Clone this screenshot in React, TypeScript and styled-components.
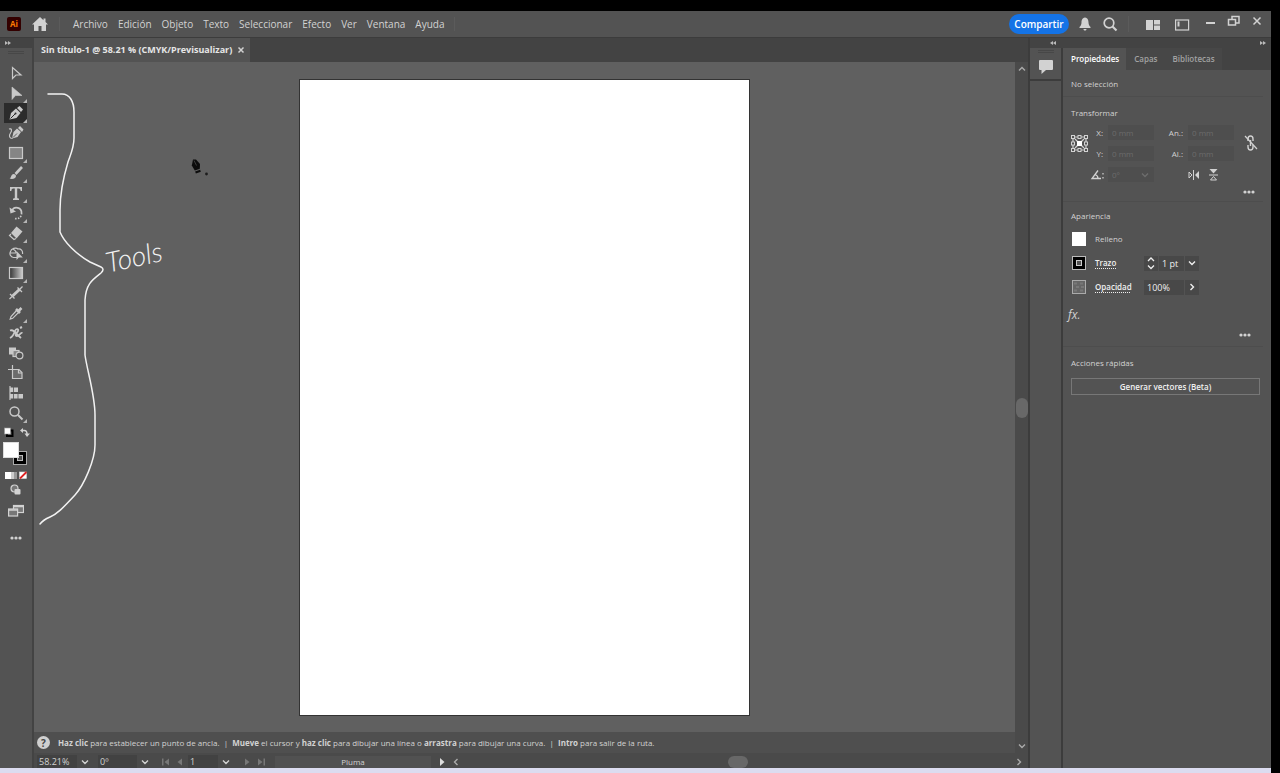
import React from "react";
import styled, { createGlobalStyle, css } from "styled-components";

const color = {
  panel: "#535353",
  rail: "#4a4a4a",
  strip: "#434343",
  line: "#3c3c3c",
  canvas: "#606060",
  field: "#484848",
  text: "#d2d2d2",
  bright: "#f0f0f0",
  dim: "#a2a2a2",
};

const GlobalStyle = createGlobalStyle`
  * { box-sizing: border-box; }
  body { margin: 0; background: #000; }
  button, input, select { font: inherit; color: inherit; }
  svg { display: block; flex: none; }
`;

const Frame = styled.div`
  display: flex;
  flex-direction: column;
  height: 100vh;
  padding: 11px 9px 0 0;
  background: #000;
  color: ${color.text};
  font: 9px/12px "Open Sans", "Noto Sans", sans-serif;
`;

const PlainButton = styled.button`
  display: flex;
  align-items: center;
  justify-content: center;
  padding: 0;
  border: 0;
  background: none;
  color: ${color.text};
`;

/* Header */
const Header = styled.header`
  display: flex;
  align-items: center;
  flex: none;
  height: 27px;
  padding: 0 7px;
  background: ${color.panel};
  border-bottom: 1px solid ${color.line};
`;
const HomeButton = styled(PlainButton)`
  margin-left: 11px;
`;
const Menu = styled.nav`
  display: flex;
  gap: 10px;
  margin-left: 11px;
  padding: 0 9px 0 13px;
  border-left: 1px solid #5b5b5b;
  border-right: 1px solid #5b5b5b;
  font-size: 10px;
  line-height: 14px;
`;
const Spacer = styled.div`
  flex: 1;
`;
const Share = styled(PlainButton)`
  width: 60px;
  height: 20px;
  margin-right: 9px;
  border-radius: 10px;
  background: #1473e6;
  color: #fff;
  font-size: 10px;
  font-weight: 600;
`;
const HeaderTools = styled.div`
  display: flex;
  gap: 10px;
  padding-right: 10px;
  border-right: 1px solid #5b5b5b;
`;
const ViewTools = styled.div`
  display: flex;
  gap: 13px;
  margin: 0 14px 0 16px;
`;
const WindowTools = styled.div`
  display: flex;
  gap: 9px;
  padding-bottom: 6px;
`;

/* Workspace */
const Workspace = styled.div`
  display: flex;
  flex: 1;
  min-height: 0;
`;
const ToolRail = styled.aside`
  display: flex;
  flex-direction: column;
  flex: none;
  width: 34px;
  background: ${color.panel};
  border-right: 2px solid #434343;
`;
const Strip = styled.div<{ $split?: boolean }>`
  display: flex;
  align-items: center;
  justify-content: space-between;
  flex: none;
  height: 10px;
  padding: 0 5px;
  background: ${color.strip};
  ${(p) => p.$split && css`padding: 0 5px 0 20px;`}
`;
const Grip = styled.div`
  width: 16px;
  height: 3px;
  margin: 3px auto 9px;
  border-top: 1px solid #474747;
  border-bottom: 1px solid #474747;
`;
const Tool = styled(PlainButton)<{ $active?: boolean }>`
  position: relative;
  flex: none;
  width: 23px;
  height: 20px;
  margin-left: 4px;
  background: ${(p) => (p.$active ? "#2b2b2b" : "none")};
  color: #c9c9c9;
`;
const Corner = styled.i`
  position: absolute;
  right: 0;
  bottom: 0;
  border: 2px solid;
  border-color: transparent #b5b5b5 #b5b5b5 transparent;
`;
const Swatches = styled.div`
  display: flex;
  flex-direction: column;
  gap: 5px;
  padding: 4px 3px 0;
`;
const RailButton = styled(PlainButton)<{ $h: number }>`
  height: ${(p) => p.$h}px;
  width: 31px;
`;

/* Document */
const Document = styled.main`
  display: flex;
  flex-direction: column;
  flex: 1;
  min-width: 0;
`;
const DocTabs = styled.div`
  flex: none;
  height: 24px;
  background: ${color.strip};
`;
const DocTab = styled.div`
  display: flex;
  align-items: center;
  gap: 5px;
  width: max-content;
  height: 24px;
  padding: 0 5px 0 7px;
  background: ${color.panel};
  color: #e6e6e6;
  font-weight: 700;
`;
const DocBody = styled.div`
  display: flex;
  flex: 1;
  min-height: 0;
`;
const Stage = styled.div`
  display: flex;
  flex-direction: column;
  flex: 1;
  min-width: 0;
`;
const Canvas = styled.div`
  position: relative;
  display: flex;
  align-items: center;
  justify-content: center;
  flex: 1;
  min-height: 0;
  background: ${color.canvas};
`;
const Artboard = styled.div`
  height: calc(100% - 33px);
  aspect-ratio: 451 / 637;
  background: #fff;
  border: 1px solid #333;
`;
const Ink = styled.svg`
  position: absolute;
  left: 0;
  top: 0;
`;
const HandNote = styled.span`
  position: absolute;
  left: 71px;
  top: 178px;
  color: #f2f2f2;
  font: italic 300 28px/32px Lato, sans-serif;
  transform: rotate(-12deg);
`;
const Hint = styled.p`
  display: flex;
  align-items: center;
  flex: none;
  height: 21px;
  margin: 0;
  padding-left: 3px;
  gap: 8px;
  background: #4f4f4f;
  white-space: nowrap;
  font-size: 8px;
`;
const HelpDot = styled.span`
  display: grid;
  place-items: center;
  width: 13px;
  height: 13px;
  border-radius: 50%;
  background: #cfcfcf;
  color: #444;
  font-size: 10px;
  font-weight: 700;
`;
const VScroll = styled.div`
  display: flex;
  flex-direction: column;
  align-items: center;
  flex: none;
  width: 13px;
  padding: 2px 0;
  background: ${color.rail};
  color: #aaa;
`;
const Thumb = styled.div<{ $w: number; $h: number }>`
  flex: none;
  width: ${(p) => p.$w}px;
  height: ${(p) => p.$h}px;
  border-radius: 6px;
  background: #686868;
`;
const Status = styled.footer`
  display: flex;
  align-items: center;
  flex: none;
  height: 15px;
  overflow: hidden;
  padding: 2px 4px 0 3px;
  background: ${color.rail};
`;
const Pick = styled.label<{ $w: number }>`
  display: flex;
  align-items: center;
  flex: none;
  width: ${(p) => p.$w}px;
  margin-right: 5px;
  select {
    appearance: none;
    flex: 1;
    min-width: 0;
    height: 14px;
    padding: 0 2px;
    border: 0;
    border-radius: 0;
    background: #424242;
  }
  svg { width: 16px; }
`;
const PageNav = styled.div`
  display: flex;
  gap: 4px;
  margin: 0 3px;
  color: #777;
`;
const ToolName = styled.div`
  flex: none;
  width: 156px;
  margin-left: 6px;
  text-align: center;
  background: #515151;
  font-size: 8px;
`;
const HScroll = styled.div`
  display: flex;
  align-items: center;
  flex: 1;
  gap: 4px;
  padding-left: 6px;
  color: #aaa;
`;

/* Dock */
const Dock = styled.aside`
  display: flex;
  flex-direction: column;
  flex: none;
  width: 243px;
  border-left: 2px solid ${color.line};
`;
const DockBody = styled.div`
  display: flex;
  flex: 1;
  min-height: 0;
`;
const IconRail = styled.div`
  flex: none;
  width: 33px;
  background: ${color.panel};
  border-right: 2px solid ${color.line};
`;
const IconSlot = styled.div`
  display: flex;
  flex-direction: column;
  align-items: center;
  height: 33px;
  border-bottom: 2px solid ${color.line};
`;
const ShortGrip = styled(Grip)`
  margin: 2px auto 4px;
`;
const Panel = styled.section`
  flex: 1;
  min-width: 0;
  background: ${color.panel};
`;
const PanelTabs = styled.div`
  display: flex;
  height: 22px;
  background: ${color.strip};
  font-size: 8px;
`;
const PanelTab = styled(PlainButton)<{ $on?: boolean }>`
  padding: 0 7px 0 8px;
  background: ${(p) => (p.$on ? color.panel : "#474747")};
  color: ${(p) => (p.$on ? "#fff" : color.dim)};
  font-weight: 600;
`;
const Section = styled.section<{ $h: number; $pad: number }>`
  display: flex;
  flex-direction: column;
  min-height: ${(p) => p.$h}px;
  margin-right: 8px;
  padding: ${(p) => p.$pad}px 3px 0 8px;
  font-size: 8px;
  & + & {
    border-top: 1px solid #4d4d4d;
  }
`;
const Heading = styled.h2`
  margin: 0;
  font-size: 8px;
  line-height: 12px;
  font-weight: 400;
`;
const TransformGrid = styled.div`
  display: grid;
  grid-template-columns: 17px 20px 46px 34px 46px 1fr;
  grid-template-rows: repeat(3, 21px);
  align-items: center;
  margin-top: 3px;
`;
const FieldLabel = styled.label`
  padding-right: 5px;
  text-align: right;
`;
const Field = styled.input`
  width: 100%;
  height: 15px;
  padding: 0 4px;
  border: 0;
  background: #4e4e4e;
  color: #6c6c6c;
`;
const Span = styled.div<{ $col: string; $row: string }>`
  grid-column: ${(p) => p.$col};
  grid-row: ${(p) => p.$row};
  display: flex;
  align-items: center;
  gap: 9px;
`;
const AngleBox = styled.div`
  grid-column: 3;
  grid-row: 3;
  display: flex;
  align-items: center;
  padding-right: 4px;
  background: #4e4e4e;
  color: #6c6c6c;
`;
const More = styled(PlainButton)<{ $inset: number }>`
  align-self: flex-end;
  height: 10px;
  margin-top: 2px;
  margin-right: ${(p) => p.$inset}px;
`;
const LookList = styled.div`
  margin-top: 5px;
`;
const LookRow = styled.div`
  display: flex;
  align-items: center;
  height: 24px;
`;
const LookName = styled.label<{ $link?: boolean }>`
  width: 49px;
  margin-left: 8px;
  ${(p) =>
    p.$link &&
    css`
      color: ${color.bright};
      font-weight: 600;
      text-decoration: underline dotted;
      text-underline-offset: 2px;
    `}
`;
const Combo = styled.div`
  display: flex;
  align-items: center;
  height: 15px;
  gap: 1px;
  font-size: 9px;
`;
const ComboInput = styled.input<{ $w: number }>`
  width: ${(p) => p.$w}px;
  height: 15px;
  padding: 0 3px;
  border: 0;
  background: ${color.field};
  color: ${color.bright};
`;
const ComboButton = styled(PlainButton)`
  width: 14px;
  height: 15px;
  background: ${color.field};
  color: #eee;
`;
const Fx = styled(PlainButton)`
  align-self: flex-start;
  margin: 8px 0 5px -3px;
  font: italic 12px/16px "Open Sans", sans-serif;
`;
const Action = styled(PlainButton)`
  width: 100%;
  height: 17px;
  margin-top: 9px;
  border: 1px solid #777;
  color: ${color.bright};
  font-size: 8px;
  font-weight: 600;
`;
const Taskbar = styled.div`
  flex: none;
  height: 5px;
  background: #dcdcf0;
`;

type GlyphProps = { w?: number; h?: number; children: React.ReactNode };
const Glyph = ({ w = 16, h = 16, children }: GlyphProps) => (
  <svg width={w} height={h} viewBox={`0 0 ${w} ${h}`} fill="none" stroke="currentColor" strokeWidth="1.2" aria-hidden="true">
    {children}
  </svg>
);

const Chevron = ({ dir = "down" }: { dir?: "down" | "up" | "left" | "right" }) => {
  const d = {
    down: "M2 3.5 5 6.5 8 3.5",
    up: "M2 6.5 5 3.5 8 6.5",
    left: "M6.5 2 3.5 5 6.5 8",
    right: "M3.5 2 6.5 5 3.5 8",
  }[dir];
  return (
    <Glyph w={10} h={10}>
      <path d={d} strokeWidth="1.4" />
    </Glyph>
  );
};

const Dots = () => (
  <Glyph w={14} h={6}>
    <g fill="currentColor" stroke="none">
      <circle cx="3" cy="3" r="1.6" />
      <circle cx="7" cy="3" r="1.6" />
      <circle cx="11" cy="3" r="1.6" />
    </g>
  </Glyph>
);

const DoubleArrow = ({ left }: { left?: boolean }) => (
  <Glyph w={6} h={5}>
    <path fill="#bbb" stroke="none" d={left ? "M3 0v4L0 2zM6 0v4L3 2z" : "M0 0v4l3-2zM3 0v4l3-2z"} />
  </Glyph>
);

const tools: { name: string; corner?: boolean; active?: boolean; art: React.ReactNode }[] = [
  { name: "Selección", art: <path d="M4.5 2.5v11l3.500-3.500h5z" /> },
  { name: "Selección directa", corner: true, art: <path fill="currentColor" d="M4 2v12.500l3.500-4h6.500z" strokeWidth="0.6" /> },
  {
    name: "Pluma",
    corner: true,
    active: true,
    art: (
      <>
        <path fill="currentColor" stroke="none" d="M1.500 14.500 3 8l5-4.500 4.500 4.500-4 5z" />
        <path fill="currentColor" stroke="none" d="m9 3 2.500-2 3.500 3.500-2 2.500z" />
        <path d="m2.500 13.500 4.500-4.500" stroke="#2b2b2b" strokeWidth="1" />
        <circle cx="7.500" cy="8.500" r="1" fill="#2b2b2b" stroke="none" />
      </>
    ),
  },
  {
    name: "Curvatura",
    art: (
      <>
        <path fill="currentColor" stroke="none" d="m4 13.500 1.500-6.500L9 3.500 13 7l-3.500 5zM10 3l2-2 3.500 3.500L14 7z" />
        <path d="m5 12.500 4-4" stroke="#535353" strokeWidth="0.900" />
        <path d="M1 4c3-1 3 2 1.500 4-2 3-1 5.500 2 5.500" />
      </>
    ),
  },
  { name: "Rectángulo", corner: true, art: <rect x="1.5" y="2.5" width="13" height="11" fill="#858585" /> },
  {
    name: "Pincel",
    corner: true,
    art: (
      <>
        <path d="m14 2-6.500 7" strokeWidth="2.600" />
        <path fill="currentColor" stroke="none" d="M1.500 13.500c2-.5 1.500-4.500 4-4.500 3 0 3 3 1.500 4s-3.500 1.300-5.500.5z" />
      </>
    ),
  },
  {
    name: "Texto",
    corner: true,
    art: (
      <path
        fill="currentColor"
        stroke="none"
        d="M2 2h12v4h-1.300c-.3-1.600-.8-2.400-2-2.400H9.200v9c0 .7.600.9 1.800 1V15H5v-1.400c1.200-.1 1.800-.3 1.800-1v-9H5.300c-1.200 0-1.700.8-2 2.400H2z"
      />
    ),
  },
  {
    name: "Rotar",
    corner: true,
    art: (
      <>
        <path d="M4 5.500A5 5 0 0 1 13.500 8" strokeWidth="1.700" />
        <path d="M13.500 8A5 5 0 0 1 6 13" strokeDasharray="1.500 1.300" strokeWidth="1.700" />
        <path fill="currentColor" stroke="none" d="M1.500 2.500 2.500 8.500l5.500-2z" />
      </>
    ),
  },
  {
    name: "Borrador",
    corner: true,
    art: (
      <>
        <path fill="currentColor" stroke="none" d="m8.500 1.500 6 5-6 7L3 8z" />
        <path d="m3 9-1.500 1.500 4.500 4L8 13.500" />
      </>
    ),
  },
  {
    name: "Creador de formas",
    corner: true,
    art: (
      <>
        <path d="M9 12.500H5.500a4 4 0 0 1-3-6C3 3.500 8 2 10 4c3-.5 5 2 4.500 5M5 4c2 1 3 2.500 3.500 4M2.500 8H8" />
        <path fill="currentColor" stroke="none" d="M8.500 6v9l2.300-2.500h4z" />
      </>
    ),
  },
  {
    name: "Degradado",
    corner: true,
    art: (
      <>
        <defs>
          <linearGradient id="fade">
            <stop stopColor="#333" />
            <stop offset="1" stopColor="#ccc" />
          </linearGradient>
        </defs>
        <rect x="1.5" y="2.500" width="13" height="11" fill="url(#fade)" />
      </>
    ),
  },
  {
    name: "Cota",
    art: (
      <>
        <path d="m4.500 11 7-6.500" strokeWidth="3" />
        <path d="m2 9 4.500 4.500M9.500 2.500 14 7M1.500 14l2.500-2.500M12 4l2.500-2.500" strokeWidth="1.300" />
      </>
    ),
  },
  {
    name: "Cuentagotas",
    corner: true,
    art: (
      <>
        <path d="m9 5-6 6.500-.8 2.500 2.500-.7L11 7" />
        <path d="m8 4 4 4M11 5.500 13.500 3" strokeWidth="2.600" />
      </>
    ),
  },
  {
    name: "Posición libre",
    art: (
      <>
        <path d="M2 13c2-1 4-4 5-7s4-2 3 0-4 5-1 5 3-4 5.500-3" strokeWidth="1.800" />
        <path d="M2 5.500c3-1 5 1 7 4l4 3.500" strokeWidth="1.800" />
        <path d="m12 3 2-1" strokeWidth="2" />
      </>
    ),
  },
  {
    name: "Fusión",
    art: (
      <>
        <rect x="1" y="2.500" width="7" height="7" fill="currentColor" stroke="none" />
        <rect x="5" y="5.500" width="6" height="6" fill="#868686" />
        <circle cx="11.500" cy="10.500" r="3.400" fill="#535353" />
      </>
    ),
  },
  {
    name: "Mesa de trabajo",
    art: (
      <>
        <path d="M4.500 0v5M0 4.500h4" />
        <path d="M4.500 4.500h6.500l3 3v6H4.500z" fill="#6c6c6c" />
        <path d="M10.500 4.500v3.500H14" />
      </>
    ),
  },
  {
    name: "Gráfica",
    art: (
      <>
        <path d="M2 1v14" />
        <rect x="2" y="2.500" width="8" height="4.500" fill="currentColor" stroke="none" />
        <rect x="2" y="9" width="13" height="4.500" fill="currentColor" stroke="none" />
        <path d="M5.500 9v5M10 9v5M5.500 2v5" stroke="#535353" strokeWidth="0.800" />
      </>
    ),
  },
  {
    name: "Zoom",
    corner: true,
    art: (
      <>
        <circle cx="6.500" cy="6.500" r="4.500" strokeWidth="1.500" />
        <path d="m10 10 4.500 4.500" strokeWidth="2" />
      </>
    ),
  },
];

const menus = ["Archivo", "Edición", "Objeto", "Texto", "Seleccionar", "Efecto", "Ver", "Ventana", "Ayuda"];

const SwatchArt = () => (
  <>
    <Glyph w={28} h={10}>
      <rect x="4" y="3.500" width="5.500" height="5.500" stroke="#000" strokeWidth="2" />
      <rect x="1.500" y="1" width="6" height="6" fill="#fff" stroke="#999" strokeWidth="0.600" />
      <path d="M19 3.500h2.500c2 0 2.500 1 2.500 4" strokeWidth="1.500" />
      <path fill="currentColor" stroke="none" d="M17 3.500 20 1v5zM21.500 6.500H27L24 10z" />
    </Glyph>
    <Glyph w={28} h={24}>
      <rect x="10.500" y="9.500" width="13" height="13" fill="#000" stroke="#aaa" strokeWidth="1" />
      <rect x="14.500" y="13.500" width="5" height="5" fill="#535353" stroke="#bbb" strokeWidth="1" />
      <rect x="0.500" y="0.500" width="15" height="15" fill="#fff" stroke="#ddd" strokeWidth="1" />
    </Glyph>
    <Glyph w={28} h={8}>
      <rect x="2" y="1" width="6" height="7" fill="#fff" stroke="none" />
      <rect x="8" y="1" width="6" height="7" fill="#999" stroke="none" />
      <rect x="8" y="1" width="3" height="7" fill="#ccc" stroke="none" />
      <rect x="16.500" y="1" width="7" height="6.500" fill="#fff" stroke="#ddd" strokeWidth="0.600" />
      <path d="m17 7.500 6.500-6.500" stroke="#d22" strokeWidth="1.800" />
    </Glyph>
  </>
);

const ReferenceGrid = () => (
  <Glyph w={17} h={17}>
    {[2, 8.5, 15].map((y) =>
      [2, 8.5, 15].map((x) => (
        <rect key={`${x}-${y}`} x={x - 1.5} y={y - 1.5} width="3" height="3" strokeWidth="1" />
      ))
    )}
    <path d="M4 2h3M10 2h3M4 15h3M10 15h3M2 4v3M2 10v3M15 4v3M15 10v3M4 4l3 3M13 4l-3 3M4 13l3-3M13 13l-3-3" />
    <rect x="6.500" y="6.500" width="4" height="4" fill="#fff" stroke="#fff" strokeWidth="1" />
  </Glyph>
);

export default function App() {
  return (
    <Frame>
      <GlobalStyle />
      <Header>
        <svg width="14" height="14" viewBox="0 0 14 14" role="img" aria-label="Illustrator">
          <rect width="14" height="14" rx="2" fill="#330000" />
          <text x="7" y="10" textAnchor="middle" fill="#ff7c00" fontSize="8" fontWeight="700" fontFamily="Open Sans">Ai</text>
        </svg>
        <HomeButton aria-label="Inicio">
          <Glyph>
            <path fill="currentColor" stroke="none" d="M8 1 0 8.500h2V15h4.500v-5h3v5H14V8.500h2l-2.500-2.400V2.500h-2v1.700z" />
          </Glyph>
        </HomeButton>
        <Menu>
          {menus.map((m) => (
            <PlainButton key={m}>{m}</PlainButton>
          ))}
        </Menu>
        <Spacer />
        <Share>Compartir</Share>
        <HeaderTools>
          <PlainButton aria-label="Notificaciones">
            <Glyph w={14}>
              <path fill="currentColor" stroke="none" d="M7 1.500c-3 .5-3.500 3-3.500 5S2.500 10 1.500 11v1h11v-1c-1-1-2-2.500-2-4.500s-.5-4.500-3.500-5zM5.500 13h3c0 2-3 2-3 0z" />
            </Glyph>
          </PlainButton>
          <PlainButton aria-label="Buscar">
            <Glyph>
              <circle cx="7" cy="7" r="4.800" strokeWidth="1.700" />
              <path d="m10.500 10.500 4 4" strokeWidth="2.200" />
            </Glyph>
          </PlainButton>
        </HeaderTools>
        <ViewTools>
          <PlainButton aria-label="Organizar documentos">
            <Glyph>
              <path fill="currentColor" stroke="none" d="M1 4h7v10H1zM9 4h6v4.500H9zM9 9.500h6V14H9z" />
            </Glyph>
          </PlainButton>
          <PlainButton aria-label="Espacio de trabajo">
            <Glyph>
              <rect x="1.600" y="4" width="13" height="10" />
              <path d="M4.500 5.500v5" strokeWidth="2" />
            </Glyph>
          </PlainButton>
        </ViewTools>
        <WindowTools>
          <PlainButton aria-label="Minimizar">
            <Glyph w={14} h={14}>
              <path d="M2 9h9" strokeWidth="2" />
            </Glyph>
          </PlainButton>
          <PlainButton aria-label="Restaurar">
            <Glyph w={14} h={14}>
              <rect x="1.500" y="5.500" width="7" height="5.500" strokeWidth="1.500" />
              <path d="M5 5V2.500h7V9H9" strokeWidth="1.500" />
            </Glyph>
          </PlainButton>
          <PlainButton aria-label="Cerrar">
            <Glyph w={14} h={14}>
              <path d="m3.500 3.500 7 7m0-7-7 7" strokeWidth="1.500" />
            </Glyph>
          </PlainButton>
        </WindowTools>
      </Header>

      <Workspace>
        <ToolRail>
          <Strip><DoubleArrow /></Strip>
          <Grip />
          {tools.map((t) => (
            <Tool key={t.name} aria-label={t.name} $active={t.active}>
              <Glyph>{t.art}</Glyph>
              {t.corner && <Corner />}
            </Tool>
          ))}
          <Swatches><SwatchArt /></Swatches>
          <RailButton $h={22} aria-label="Modo de dibujo">
            <Glyph w={12} h={12}>
              <circle cx="4.500" cy="4.500" r="3.500" fill="#777" />
              <rect x="4.500" y="5" width="6" height="5.500" rx="1" fill="currentColor" stroke="none" />
            </Glyph>
          </RailButton>
          <RailButton $h={20} aria-label="Modo de pantalla">
            <Glyph w={16} h={14}>
              <rect x="5.500" y="1.500" width="10" height="7" fill="#777" />
              <rect x="0.600" y="5" width="9" height="7" fill="#777" />
              <path d="M5.500 2.500h10M1 6h9" strokeWidth="1.500" />
            </Glyph>
          </RailButton>
          <RailButton $h={34} aria-label="Editar barra de herramientas"><Dots /></RailButton>
        </ToolRail>

        <Document>
          <DocTabs>
            <DocTab>
              Sin título-1 @ 58.21 % (CMYK/Previsualizar)
              <PlainButton aria-label="Cerrar documento">
                <Glyph w={8} h={8}>
                  <path d="m1.500 1.500 5 5m0-5-5 5" strokeWidth="1.500" />
                </Glyph>
              </PlainButton>
            </DocTab>
          </DocTabs>
          <DocBody>
            <Stage>
              <Canvas>
                <Artboard />
                <Ink width="180" height="480" viewBox="34 62 180 480" fill="none" aria-hidden="true">
                  <path
                    d="M48 94H62C70 94 74 102 74 112V138C74 148 70 156 68 162C62 182 60 195 60 210V232C64 242 76 254 90 262L101 267Q105 269 101 273C92 280 86 284 85 300V355C87 370 95 395 95 415V445C95 460 84 485 75 495C62 509 57 514 50 517Q43 520 40 524"
                    stroke="#f2f2f2"
                    strokeWidth="1.500"
                    strokeLinecap="round"
                  />
                  <path d="M193 159.500 191.800 165.500l3 5 5-1.800.2-4.700-4-4.500z" fill="#0c0c0c" />
                  <path d="m194 160.500 2.500 5" stroke="#505050" strokeWidth="0.700" />
                  <path d="m195.500 172.500 5-1.800" stroke="#0c0c0c" strokeWidth="2.200" />
                  <circle cx="206.500" cy="174" r="1.400" fill="#1c1c1c" />
                </Ink>
                <HandNote>Tools</HandNote>
              </Canvas>
              <Hint>
                <HelpDot>?</HelpDot>
                <span>
                  <b>Haz clic</b> para establecer un punto de ancla. &nbsp;|&nbsp; <b>Mueve</b> el cursor y <b>haz clic</b> para dibujar una línea o <b>arrastra</b> para dibujar una curva. &nbsp;|&nbsp; <b>Intro</b> para salir de la ruta.
                </span>
              </Hint>
            </Stage>
            <VScroll>
              <Chevron dir="up" />
              <Spacer />
              <Thumb $w={12} $h={20} />
              <Spacer />
              <Chevron />
            </VScroll>
          </DocBody>
          <Status>
            <Pick $w={56}>
              <select aria-label="Nivel de zoom"><option>58.21%</option></select>
              <Chevron />
            </Pick>
            <Pick $w={55}>
              <select aria-label="Rotación"><option>0º</option></select>
              <Chevron />
            </Pick>
            <PageNav>
              <Glyph w={10} h={10}><path fill="currentColor" stroke="none" d="M1 1.500h1.500v7H1zM8 1.500v7L3.500 5z" /></Glyph>
              <Glyph w={10} h={10}><path fill="currentColor" stroke="none" d="M7 1.500v7L2.500 5z" /></Glyph>
            </PageNav>
            <Pick $w={46}>
              <select aria-label="Mesa de trabajo"><option>1</option></select>
              <Chevron />
            </Pick>
            <PageNav>
              <Glyph w={10} h={10}><path fill="currentColor" stroke="none" d="M3 1.500v7L7.500 5z" /></Glyph>
              <Glyph w={10} h={10}><path fill="currentColor" stroke="none" d="M2 1.500v7L6.500 5zM7.500 1.500H9v7H7.500z" /></Glyph>
            </PageNav>
            <ToolName>Pluma</ToolName>
            <HScroll>
              <Glyph w={10} h={10}><path fill="#ddd" stroke="none" d="M3 1v8l4.500-4z" /></Glyph>
              <Chevron dir="left" />
              <Spacer />
              <Thumb $w={20} $h={12} />
              <Spacer />
              <Chevron dir="right" />
            </HScroll>
          </Status>
        </Document>

        <Dock>
          <Strip $split><DoubleArrow left /><DoubleArrow /></Strip>
          <DockBody>
            <IconRail>
              <IconSlot>
                <ShortGrip />
                <PlainButton aria-label="Comentarios">
                  <Glyph w={16} h={18}>
                    <path fill="currentColor" stroke="none" d="M1 4q0-1 1-1h12q1 0 1 1v8q0 1-1 1H8l-4.500 4V13H2q-1 0-1-1z" />
                  </Glyph>
                </PlainButton>
              </IconSlot>
            </IconRail>
            <Panel>
              <PanelTabs>
                <PanelTab $on>Propiedades</PanelTab>
                <PanelTab>Capas</PanelTab>
                <PanelTab>Bibliotecas</PanelTab>
              </PanelTabs>
              <Section $h={26} $pad={8}><Heading>No selección</Heading></Section>
              <Section $h={105} $pad={10}>
                <Heading>Transformar</Heading>
                <TransformGrid>
                  <Span $col="1" $row="1 / 3"><ReferenceGrid /></Span>
                  <FieldLabel htmlFor="x">X:</FieldLabel>
                  <Field id="x" defaultValue="0 mm" />
                  <FieldLabel htmlFor="w">An.:</FieldLabel>
                  <Field id="w" defaultValue="0 mm" />
                  <Span $col="6" $row="1 / 3">
                    <PlainButton aria-label="Restringir proporciones">
                      <Glyph w={34} h={18}>
                        <path d="M14 7V5q0-3 2.500-3T19 5v2M14 11v2q0 3 2.500 3t2.500-3v-2M16.500 6v6" strokeWidth="1.400" />
                        <path d="m11 2 12 13" strokeWidth="1.200" />
                      </Glyph>
                    </PlainButton>
                  </Span>
                  <FieldLabel htmlFor="y">Y:</FieldLabel>
                  <Field id="y" defaultValue="0 mm" />
                  <FieldLabel htmlFor="h">Al.:</FieldLabel>
                  <Field id="h" defaultValue="0 mm" />
                  <Span $col="2" $row="3">
                    <Glyph w={18} h={12}>
                      <path d="m10 1.500-6 8h9M7 5.500q3 1 3 4" strokeWidth="1.300" />
                      <path d="M15 4v1.500M15 8v1.500" />
                    </Glyph>
                  </Span>
                  <AngleBox>
                    <Field aria-label="Ángulo" defaultValue="0°" />
                    <Chevron />
                  </AngleBox>
                  <Span $col="5 / 7" $row="3">
                    <PlainButton aria-label="Voltear horizontalmente">
                      <Glyph w={11} h={10}>
                        <path fill="currentColor" stroke="none" d="M11 1v8L7 5z" />
                        <path d="M1 2v6l3-3zM5.500 0v10" strokeWidth="1" />
                      </Glyph>
                    </PlainButton>
                    <PlainButton aria-label="Voltear verticalmente">
                      <Glyph w={11} h={12}>
                        <path fill="currentColor" stroke="none" d="M1.500 0h8l-4 4.500z" />
                        <path d="M2.500 11h6l-3-3.500zM1 6h9" strokeWidth="1" />
                      </Glyph>
                    </PlainButton>
                  </Span>
                </TransformGrid>
                <More $inset={4} aria-label="Más opciones"><Dots /></More>
              </Section>
              <Section $h={145} $pad={8}>
                <Heading>Apariencia</Heading>
                <LookList>
                  <LookRow>
                    <Glyph><rect x="1" y="1" width="14" height="14" fill="#fff" stroke="none" /></Glyph>
                    <LookName>Relleno</LookName>
                  </LookRow>
                  <LookRow>
                    <Glyph>
                      <rect x="1.500" y="1.500" width="13" height="13" fill="#000" stroke="#bbb" strokeWidth="1" />
                      <rect x="5.500" y="5.500" width="5" height="5" fill="#535353" stroke="#ccc" strokeWidth="1" />
                    </Glyph>
                    <LookName $link htmlFor="stroke">Trazo</LookName>
                    <Combo>
                      <ComboButton as="span">
                        <Glyph w={10} h={14}>
                          <path d="M2 5 5 2l3 3M2 9.500l3 3 3-3" strokeWidth="1.300" />
                        </Glyph>
                      </ComboButton>
                      <ComboInput id="stroke" $w={25} defaultValue="1 pt" />
                      <ComboButton aria-label="Grosor de trazo"><Chevron /></ComboButton>
                    </Combo>
                  </LookRow>
                  <LookRow>
                    <Glyph>
                      <rect x="1.500" y="1.500" width="13" height="13" fill="#666" stroke="#aaa" strokeWidth="1" />
                      <path d="M3 4.500h3M9 4.500h3M5 8h3M10 8h3M3 11.500h3M9 11.500h3" stroke="#787878" strokeWidth="2" />
                    </Glyph>
                    <LookName $link htmlFor="opacity">Opacidad</LookName>
                    <Combo>
                      <ComboInput id="opacity" $w={40} defaultValue="100%" />
                      <ComboButton aria-label="Opacidad"><Chevron dir="right" /></ComboButton>
                    </Combo>
                  </LookRow>
                </LookList>
                <Fx aria-label="Elegir un efecto">fx.</Fx>
                <More $inset={8} aria-label="Más apariencia"><Dots /></More>
              </Section>
              <Section $h={60} $pad={10}>
                <Heading>Acciones rápidas</Heading>
                <Action>Generar vectores (Beta)</Action>
              </Section>
            </Panel>
          </DockBody>
        </Dock>
      </Workspace>
      <Taskbar />
    </Frame>
  );
}
